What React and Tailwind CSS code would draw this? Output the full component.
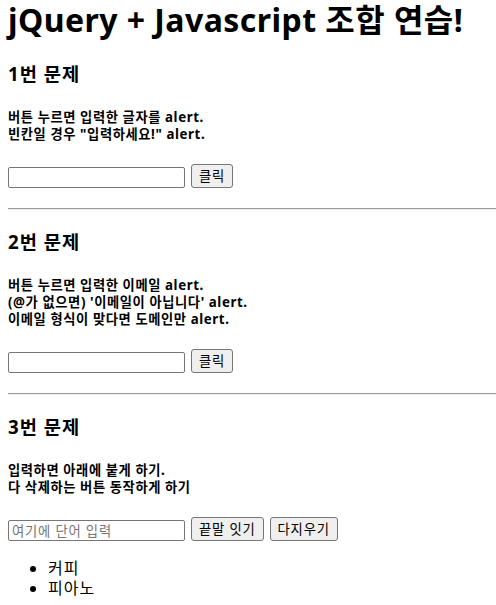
import React from 'react';

const Row = ({ placeholder, buttons }) => (
  <div className="flex items-end gap-[6px]">
    <input
      type="text"
      placeholder={placeholder}
      className="w-[177px] h-[21px] border border-[#767676] rounded-[2px] px-[3px] text-[13.33px] tracking-[0.8px] bg-white placeholder:text-[#757575] outline-none"
    />
    {buttons.map((b) => (
      <button
        key={b}
        className="h-[24px] px-[7px] border border-[#767676] rounded-[3px] bg-[#efefef] text-[13.33px] tracking-[0.8px] leading-[20px] text-black"
      >
        {b}
      </button>
    ))}
  </div>
);

const Hr = () => <div className="mt-[20px] ml-2 h-[2px] border-t border-t-[#9a9a9a] border-b border-b-[#eeeeee]" />;

const App = () => {
  return (
    <div className="bg-white text-black min-h-[605px] pt-[2px] font-['Noto_Sans','Noto_Sans_CJK_KR',sans-serif]">
      <div className="pl-2">
        <h1 className="text-[32px] font-bold leading-[36px] tracking-[0.45px] whitespace-nowrap">jQuery + Javascript 조합 연습!</h1>

        <h3 className="mt-[24px] text-[18.72px] font-bold leading-[23px] tracking-[1px]">1번 문제</h3>
        <p className="mt-[24px] text-[13.28px] font-bold leading-[17px] tracking-[0.6px]">
          버튼 누르면 입력한 글자를 alert.<br />
          빈칸일 경우 "입력하세요!" alert.
        </p>
        <div className="mt-[21px]">
          <Row buttons={['클릭']} />
        </div>
      </div>
      <Hr />

      <div className="pl-2">
        <h3 className="mt-[20px] text-[18.72px] font-bold leading-[23px] tracking-[1px]">2번 문제</h3>
        <p className="mt-[24px] text-[13.28px] font-bold leading-[17px] tracking-[0.6px]">
          버튼 누르면 입력한 이메일 alert.<br />
          (@가 없으면) '이메일이 아닙니다' alert.<br />
          이메일 형식이 맞다면 도메인만 alert.
        </p>
        <div className="mt-[21px]">
          <Row buttons={['클릭']} />
        </div>
      </div>
      <Hr />

      <div className="pl-2">
        <h3 className="mt-[20px] text-[18.72px] font-bold leading-[23px] tracking-[1px]">3번 문제</h3>
        <p className="mt-[24px] text-[13.28px] font-bold leading-[17px] tracking-[0.6px]">
          입력하면 아래에 붙게 하기.<br />
          다 삭제하는 버튼 동작하게 하기
        </p>
        <div className="mt-[21px]">
          <Row placeholder="여기에 단어 입력" buttons={['끝말 잇기', '다지우기']} />
        </div>
        <ul className="mt-[17px] pl-[40px] list-disc text-[16px] leading-[20px] tracking-[1px]">
          <li>커피</li>
          <li>피아노</li>
        </ul>
      </div>
    </div>
  );
};

export default App;
